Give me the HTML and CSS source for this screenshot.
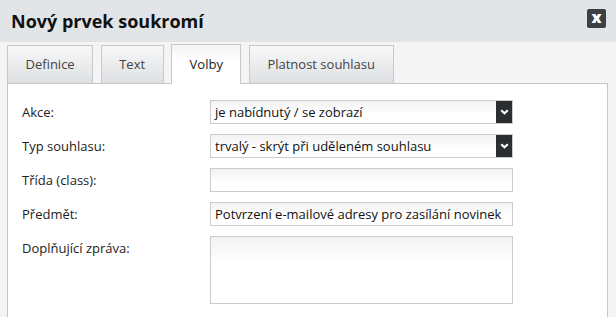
FILE: index.html
```html
<!DOCTYPE html>
<html lang="cs">
<head>
<meta charset="utf-8">
<title>Nový prvek soukromí</title>
<link rel="stylesheet" href="styles.css">
</head>
<body>
<div class="dialog">
  <div class="header">
    <h1 class="title">Nový prvek soukromí</h1>
    <span class="close">x</span>
  </div>
  <div class="tabs">
    <div class="tab">Definice</div>
    <div class="tab">Text</div>
    <div class="tab active">Volby</div>
    <div class="tab">Platnost souhlasu</div>
  </div>
  <div class="panel">
    <div class="form">
      <label class="label">Akce:</label>
      <div class="field select"><span class="value">je nabídnutý / se zobrazí</span><span class="arrow"><svg width="9" height="6" viewBox="0 0 9 6"><path d="M1.2 1.2 L4.5 4.3 L7.8 1.2" fill="none" stroke="#fff" stroke-width="2.2"/></svg></span></div>
      <label class="label">Typ souhlasu:</label>
      <div class="field select"><span class="value">trvalý - skrýt při uděleném souhlasu</span><span class="arrow"><svg width="9" height="6" viewBox="0 0 9 6"><path d="M1.2 1.2 L4.5 4.3 L7.8 1.2" fill="none" stroke="#fff" stroke-width="2.2"/></svg></span></div>
      <label class="label">Třída (class):</label>
      <div class="field"></div>
      <label class="label">Předmět:</label>
      <div class="field"><span class="value">Potvrzení e-mailové adresy pro zasílání novinek</span></div>
      <label class="label">Doplňující zpráva:</label>
      <div class="field area"></div>
    </div>
  </div>
</div>
</body>
</html>
```

FILE: styles.css
```css
* { box-sizing: border-box; }
html, body {
  margin: 0;
  padding: 0;
  background: #f4f4f4;
  font-family: "Open Sans", "DejaVu Sans", sans-serif;
  color: #222;
  overflow: hidden;
}
.dialog { width: 616px; height: 317px; }
.header {
  height: 42px;
  background: #e2e5e8;
  display: flex;
  justify-content: space-between;
  align-items: center;
  padding: 0 10px 0 11px;
}
.title {
  margin: 0;
  font-size: 18px;
  font-weight: 700;
  color: #111;
}
.close {
  align-self: flex-start;
  margin-top: 9px;
  width: 19px;
  height: 19px;
  border-radius: 2px;
  background: #3c4044;
  color: #fff;
  font-weight: 800;
  font-size: 16px;
  line-height: 16px;
  text-align: center;
}
.tabs {
  display: flex;
  align-items: flex-end;
  gap: 7.5px;
  padding-left: 7px;
  height: 41px;
}
.tab {
  height: 38px;
  padding: 0 17.5px;
  border: 1px solid #c6c8ca;
  border-bottom: none;
  background: linear-gradient(#f8f8f8, #dde0e3);
  font-size: 13px;
  color: #444;
  display: flex;
  align-items: center;
  padding-bottom: 1px;
}
.tab.active {
  height: 40px;
  margin-bottom: -1px;
  background: linear-gradient(#f3f3f3, #ffffff 40%);
  color: #222;
  position: relative;
  padding-top: 1px;
  padding-bottom: 2px;
}
.panel {
  margin: 0 8px 0 7px;
  border: 1px solid #c6c6c6;
  background: #fff;
  padding: 16px 14px 30px;
}
.form {
  display: grid;
  grid-template-columns: 188px 303px;
  row-gap: 10px;
}
.label {
  font-size: 13px;
  line-height: 24px;
  color: #222;
}
.field {
  height: 24px;
  border: 1px solid #cccccc;
  background: linear-gradient(#f2f2f2, #ffffff 60%);
  font-size: 13px;
  line-height: 22px;
  padding-left: 4px;
  display: flex;
  color: #111;
  white-space: nowrap;
  overflow: hidden;
}
.value { flex: 1; }
.arrow {
  width: 17px;
  margin: -1px -1px -1px 0;
  height: 24px;
  background: #2b2e31;
  border-bottom: 1px solid #8a93a8;
  display: flex;
  align-items: center;
  justify-content: center;
}
.field.area {
  height: 68px;
  background: linear-gradient(#f2f2f2, #ffffff 40%);
}
```
